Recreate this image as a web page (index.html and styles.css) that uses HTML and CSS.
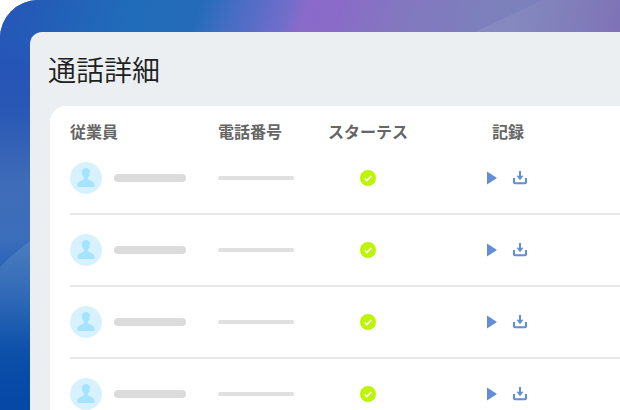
FILE: index.html
```html
<!DOCTYPE html>
<html lang="ja">
<head>
    <meta charset="UTF-8">
    <meta name="viewport" content="width=device-width, initial-scale=1.0">
    <title>通話詳細</title>
    <link rel="stylesheet" href="styles.css">
</head>
<body>

<!-- アイコン定義 -->
<svg class="icon-defs" aria-hidden="true">
    <symbol id="icon-user" viewBox="0 0 32 32">
        <path d="M16 6c-2.600 0-4 1.700-4 4.300 0 2.200.7 3.900 1.900 5v2c-.5 1.100-5.900 1.300-6.400 5.400-.2 1.300.2 2.300 1.300 2.300h14.400c1.100 0 1.500-1 1.300-2.300-.5-4.100-5.900-4.300-6.400-5.400v-2c1.200-1.100 1.900-2.800 1.900-5C20 7.700 18.600 6 16 6z"/>
    </symbol>
    <symbol id="icon-check" viewBox="0 0 16 16">
        <circle cx="8" cy="8" r="8" fill="#bdf500"/>
        <path d="M4.800 8.300l2.200 2.200 4.200-4.400" fill="none" stroke="#fff" stroke-width="1.700"/>
    </symbol>
    <symbol id="icon-play" viewBox="0 0 10 14">
        <path d="M0 .5v13L10 7z"/>
    </symbol>
    <symbol id="icon-download" viewBox="0 0 14 14">
        <path d="M1 7v4.500c0 .5.300.8.800.8h10.400c.5 0 .8-.3.800-.8V7M7 0v6" fill="none" stroke="currentColor" stroke-width="2"/>
        <path d="M3.500 4.800h7L7 9.200z"/>
    </symbol>
</svg>

<div class="frame">
    <svg class="waves" viewBox="0 0 620 410" preserveAspectRatio="none" aria-hidden="true">
        <defs>
            <linearGradient id="sky" gradientUnits="userSpaceOnUse" x1="0" y1="0" x2="560" y2="200">
                <stop offset="0" stop-color="#2655b8"/>
                <stop offset=".14" stop-color="#2264b8"/>
                <stop offset=".22" stop-color="#216cba"/>
                <stop offset=".32" stop-color="#246cba"/>
                <stop offset=".38" stop-color="#486dc4"/>
                <stop offset=".46" stop-color="#716ecb"/>
                <stop offset=".49" stop-color="#8a6aca"/>
                <stop offset=".54" stop-color="#8a6bc8"/>
                <stop offset=".64" stop-color="#8377c0"/>
                <stop offset=".82" stop-color="#7b82bb"/>
                <stop offset="1" stop-color="#7f72b6"/>
            </linearGradient>
            <linearGradient id="side" x1="0" y1="0" x2="0" y2="1">
                <stop offset="0" stop-color="#2655b8" stop-opacity="0"/>
                <stop offset=".1" stop-color="#2655b8"/>
                <stop offset=".2" stop-color="#2857b5"/>
                <stop offset=".4" stop-color="#3f6cb8"/>
                <stop offset=".55" stop-color="#3b6ebb"/>
                <stop offset=".65" stop-color="#255fb6"/>
            </linearGradient>
            <linearGradient id="wave" gradientUnits="userSpaceOnUse" x1="0" y1="242" x2="0" y2="400">
                <stop offset="0" stop-color="#4b7dbe"/>
                <stop offset=".35" stop-color="#2f69b7"/>
                <stop offset=".7" stop-color="#0c50aa"/>
                <stop offset="1" stop-color="#0548a6"/>
            </linearGradient>
            <linearGradient id="glow">
                <stop offset="0" stop-color="#9a98c8" stop-opacity=".4"/>
                <stop offset="1" stop-color="#9a98c8" stop-opacity="0"/>
            </linearGradient>
        </defs>
        <path d="M0 0h620v60H0z" fill="url(#sky)"/>
        <path d="M0 32h30v378H0z" fill="url(#side)"/>
        <path d="M0 267Q14 253 30 241v169H0z" fill="url(#wave)"/>
        <path d="M475 32Q507 17 543 0h77v32z" fill="url(#glow)"/>
    </svg>

    <main class="panel">
        <h1>通話詳細</h1>

        <div class="card">
            <table>
                <thead>
                    <tr>
                        <th class="col-name">従業員</th>
                        <th class="col-phone">電話番号</th>
                        <th class="col-status">スターテス</th>
                        <th class="col-record">記録</th>
                    </tr>
                </thead>
                <tbody>
                    <tr>
                        <td><div class="person"><svg class="avatar"><use href="#icon-user"/></svg><span class="name-bar"></span></div></td>
                        <td><div class="phone-bar"></div></td>
                        <td><svg class="check"><use href="#icon-check"/></svg></td>
                        <td class="col-record">
                            <div class="actions">
                                <button type="button" aria-label="再生"><svg class="play"><use href="#icon-play"/></svg></button>
                                <button type="button" aria-label="ダウンロード"><svg class="download"><use href="#icon-download"/></svg></button>
                            </div>
                        </td>
                    </tr>
                    <tr>
                        <td><div class="person"><svg class="avatar"><use href="#icon-user"/></svg><span class="name-bar"></span></div></td>
                        <td><div class="phone-bar"></div></td>
                        <td><svg class="check"><use href="#icon-check"/></svg></td>
                        <td class="col-record">
                            <div class="actions">
                                <button type="button" aria-label="再生"><svg class="play"><use href="#icon-play"/></svg></button>
                                <button type="button" aria-label="ダウンロード"><svg class="download"><use href="#icon-download"/></svg></button>
                            </div>
                        </td>
                    </tr>
                    <tr>
                        <td><div class="person"><svg class="avatar"><use href="#icon-user"/></svg><span class="name-bar"></span></div></td>
                        <td><div class="phone-bar"></div></td>
                        <td><svg class="check"><use href="#icon-check"/></svg></td>
                        <td class="col-record">
                            <div class="actions">
                                <button type="button" aria-label="再生"><svg class="play"><use href="#icon-play"/></svg></button>
                                <button type="button" aria-label="ダウンロード"><svg class="download"><use href="#icon-download"/></svg></button>
                            </div>
                        </td>
                    </tr>
                    <tr>
                        <td><div class="person"><svg class="avatar"><use href="#icon-user"/></svg><span class="name-bar"></span></div></td>
                        <td><div class="phone-bar"></div></td>
                        <td><svg class="check"><use href="#icon-check"/></svg></td>
                        <td class="col-record">
                            <div class="actions">
                                <button type="button" aria-label="再生"><svg class="play"><use href="#icon-play"/></svg></button>
                                <button type="button" aria-label="ダウンロード"><svg class="download"><use href="#icon-download"/></svg></button>
                            </div>
                        </td>
                    </tr>
                </tbody>
            </table>
        </div>
    </main>
</div>

</body>
</html>
```

FILE: styles.css
```css
* {
    box-sizing: border-box;
}
body {
    margin: 0;
    background-color: #fff;
    font-family: "Noto Sans CJK JP", sans-serif;
}
.icon-defs {
    display: none;
}
.frame {
    position: relative;
    height: 100vh;
    padding: 32px 0 0 30px;
    overflow: hidden;
    border-top-left-radius: 38px;
    background-color: #2655b8;
}
.waves {
    position: absolute;
    top: 0;
    left: 0;
    width: 100%;
    height: 100%;
}
.panel {
    position: relative;
    padding: 16px 0 0 20px;
    border-top-left-radius: 12px;
    background-color: #ebeff2;
}
h1 {
    margin: 0 0 16px -2px;
    font-size: 28px;
    font-weight: 350;
    line-height: 42px;
    color: #202020;
}
.card {
    padding: 15px 0 0 20px;
    border-top-left-radius: 16px;
    background-color: #fff;
}
table {
    width: 100%;
    table-layout: fixed;
    border-collapse: separate;
    border-spacing: 0;
}
th {
    height: 22px;
    padding: 0;
    font-size: 16px;
    font-weight: 700;
    line-height: 20px;
    text-align: left;
    vertical-align: top;
    white-space: nowrap;
    color: #666;
}
.col-name {
    width: 148px;
}
.col-phone {
    width: 110px;
}
.col-status {
    width: 80px;
}
td {
    height: 72px;
    padding: 0;
    border-bottom: 2px solid #e8e8e8;
    vertical-align: middle;
}
.col-record {
    padding-right: 12px;
    text-align: center;
}
.person {
    display: flex;
    align-items: center;
    gap: 12px;
}
.avatar {
    width: 32px;
    height: 32px;
    border-radius: 50%;
    background-color: #d8f1ff;
    fill: #a5e4ff;
}
.name-bar {
    width: 72px;
    height: 8px;
    border-radius: 4px;
    background-color: #dcdcdc;
}
.phone-bar {
    width: 76px;
    height: 4px;
    border-radius: 2px;
    background-color: #e0e0e0;
}
.check {
    display: block;
    width: 16px;
    height: 16px;
    margin: 0 auto;
}
.actions {
    display: flex;
    align-items: center;
    justify-content: center;
    gap: 16px;
    padding-right: 2px;
}
button {
    display: flex;
    padding: 0;
    border: none;
    background: none;
    color: #628ed5;
    fill: #628ed5;
    cursor: pointer;
}
.play {
    width: 10px;
    height: 14px;
}
.download {
    width: 14px;
    height: 14px;
}
```
